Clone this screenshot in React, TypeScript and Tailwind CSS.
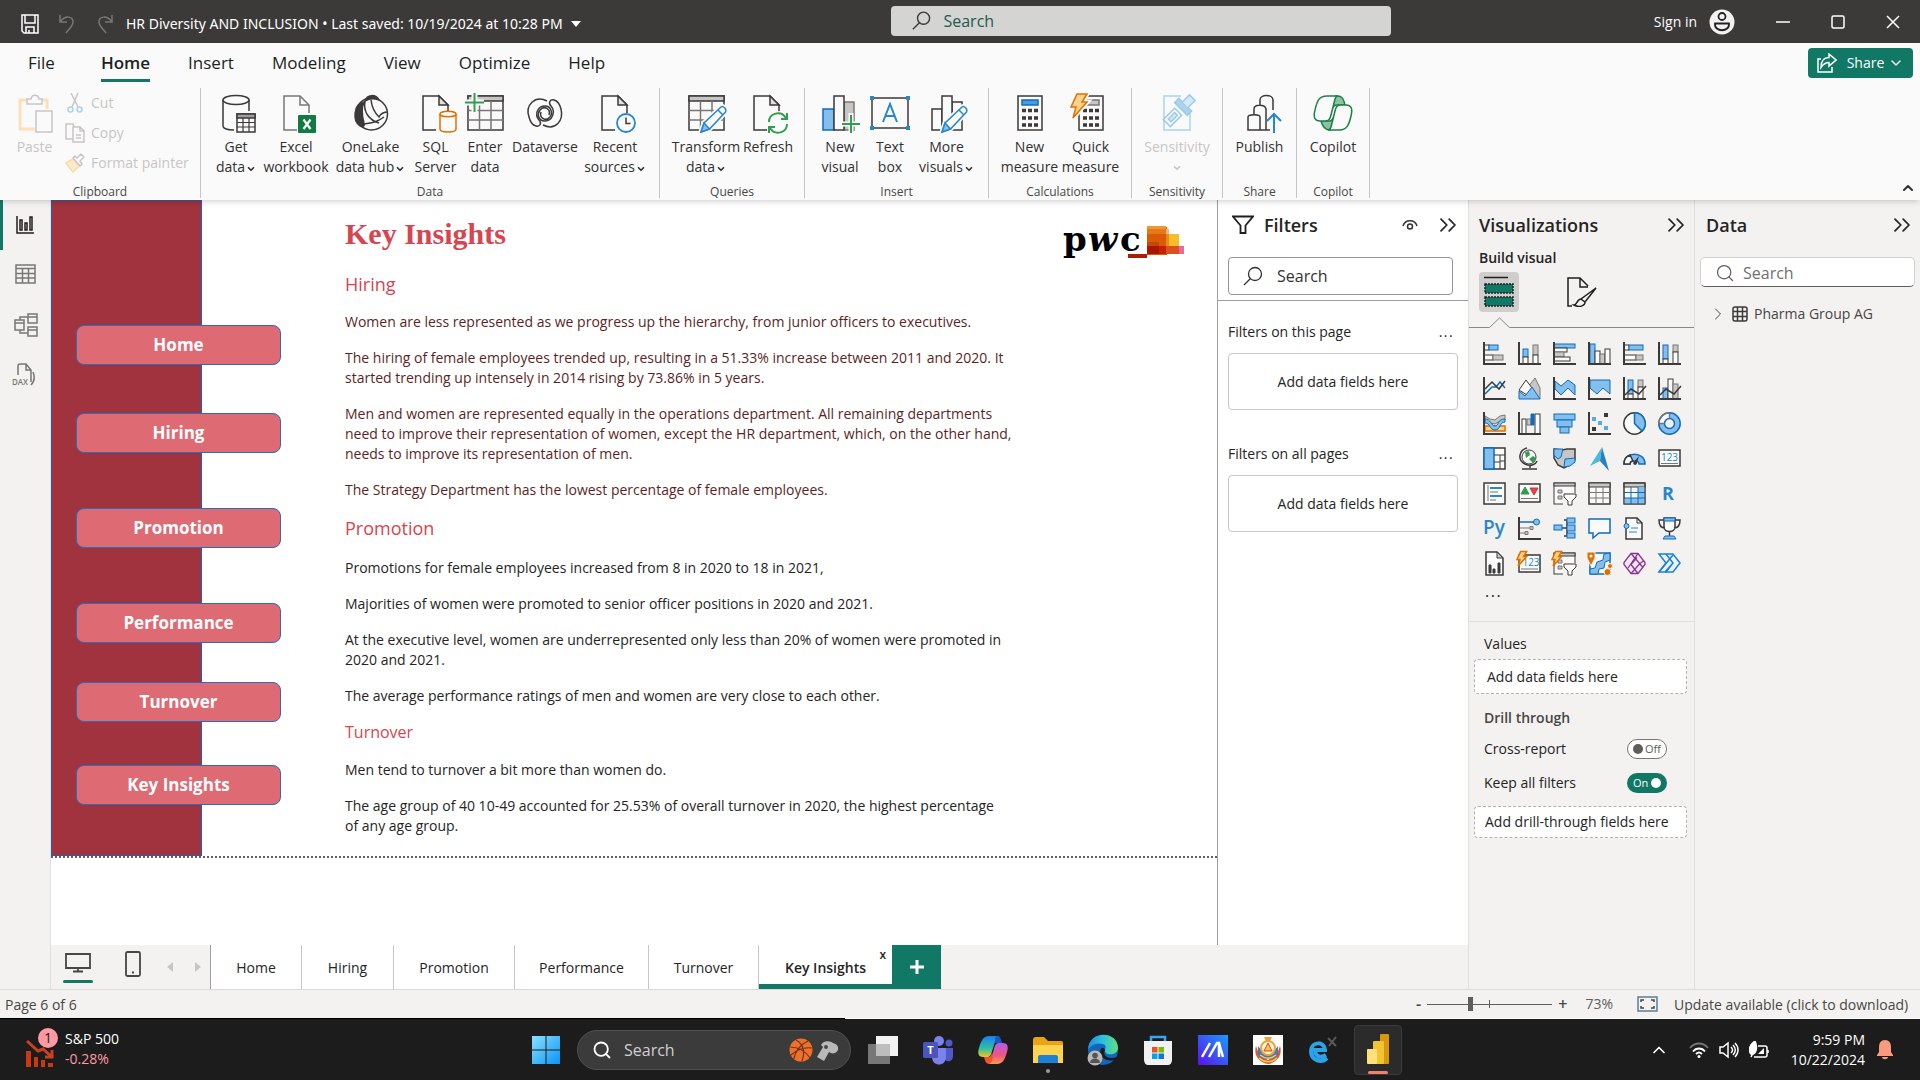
import React from "react";
import { ChevronDown, ChevronUp, ChevronRight, ChevronsRight, Search as SearchIcon } from "lucide-react";

const K = "#3b3a39";
const G = "#797775";
const GF = "#c8c6c4";
const B = "#0f6cbd";
const BF = "#83beec";
const W = "#fafafa";
const GREEN = "#2f9e4f";

type Kids = { children?: React.ReactNode };

/* ---------- ribbon icons (40 x 40) ---------- */

function Ico({ children }: Kids) {
  return (
    <svg viewBox="0 0 40 40" className="h-10 w-10 shrink-0 overflow-visible" fill="none" stroke={K} strokeWidth="1.5" aria-hidden="true">
      {children}
    </svg>
  );
}

function Pencil({ x, y }: { x: number; y: number }) {
  return (
    <g transform={`translate(${x} ${y})`}>
      <path d="M0 26l3-9L20 1c2-1.600 6 2 4.500 5L8.500 23z" fill={W} stroke={W} strokeWidth="5" />
      <path d="M0 26l3-9L20 1c2-1.600 6 2 4.500 5L8.500 23z" fill={W} stroke="#2986cc" />
      <path d="M0 26l3-9 5.500 6z" fill={BF} stroke="#2986cc" />
      <path d="M17 4l5 5" stroke="#2986cc" />
    </g>
  );
}

function DocShape({ x, color = K }: { x: number; color?: string }) {
  return (
    <g transform={`translate(${x} 0)`} stroke={color}>
      <path d="M26 20V12L17 3H1v34h13" fill={W} />
      <path d="M17 3v9h9z" fill="#e1dfdd" />
    </g>
  );
}

const GetDataIcon = () => (
  <Ico>
    <ellipse cx="20" cy="7" rx="13" ry="4.500" fill={W} />
    <path d="M7 7v26c0 2.500 5 4 11 4M33 7v11" />
    <rect x="21" y="21" width="18" height="18" fill={W} />
    <rect x="21" y="21" width="18" height="4" fill="#a19f9d" />
    <path d="M21 29.500h18M21 34h18M27 25v14M33 25v14" strokeWidth="1.200" />
  </Ico>
);
const ExcelIcon = () => (
  <Ico>
    <g transform="translate(7 0)" stroke={G}>
      <path d="M26 20V12L17 3H1v34h13" fill={W} />
      <path d="M17 3v9h9" />
    </g>
    <rect x="22" y="22" width="18" height="18" rx="1" fill="#107c41" stroke="none" />
    <path d="M27.500 26.500l7 9.500M34.500 26.500l-7 9.500" stroke="#fff" strokeWidth="2.200" />
  </Ico>
);
const OneLakeIcon = () => (
  <Ico>
    <ellipse cx="20.500" cy="21" rx="16" ry="16" />
    <path d="M13 9C3 11 1 27 9 33c3 2 5 0 4-3-2-7-3-14 0-21z" fill={K} />
    <path d="M14 8c2-7 11-7 14-1-5-2-9-2-14 1z" fill={K} />
    <path d="M14 8c-2 11 4 19 14 22M20 7c1 9 4 13 8 17 2-4 5-5 9-5M13 31c9-1 13-2 20-7" />
  </Ico>
);
const SqlIcon = () => (
  <Ico>
    <DocShape x={6} />
    <path d="M24 21v15c0 4 16 4 16 0V21" fill={W} stroke="#e07000" />
    <ellipse cx="32" cy="21" rx="8" ry="2.800" fill={W} stroke="#e07000" />
  </Ico>
);
const Grid = () => (
  <g>
    <rect x="3" y="3" width="35" height="34" fill={W} />
    <rect x="3" y="3" width="35" height="5" fill={GF} />
    <path d="M3 17.500h35M3 27h35M14.500 8v29M26 8v29" stroke={G} />
  </g>
);
const EnterIcon = () => (
  <Ico>
    <Grid />
    <path d="M9.500 0v20M0 9.500h19" stroke={W} strokeWidth="6" />
    <path d="M9.500 0v19M0 9.500h19" stroke={GREEN} strokeWidth="2" />
  </Ico>
);
const DataverseIcon = () => (
  <Ico>
    <path d="M22 8C10 2 0 12 4 24c1 4 3 8 7 9 4 1 6-3 3-6-5-6-1-14 6-14 6 0 8 7 5 11-4 5-11 1-9-5" />
    <path d="M18 32c12 6 21-4 18-16-1-4-3-8-7-9-4-1-6 3-3 6 5 6 1 15-6 15-7 0-8-7-5-11 4-5 11-1 9 5" />
  </Ico>
);
const RecentIcon = () => (
  <Ico>
    <DocShape x={6} />
    <circle cx="31" cy="30" r="9" fill={W} stroke="#2986cc" strokeWidth="1.800" />
    <path d="M31 24.500V30.500h4.500" />
  </Ico>
);
const TransformIcon = () => (
  <Ico>
    <Grid />
    <Pencil x={15} y={13} />
  </Ico>
);
const RefreshIcon = () => (
  <Ico>
    <DocShape x={5} />
    <circle cx="30" cy="30" r="12" fill={W} stroke="none" />
    <path d="M21 29c0-9 12-12 17-4M39 20v6h-6M39 31c0 9-12 12-17 4M21 40v-6h6" stroke={GREEN} strokeWidth="2" />
  </Ico>
);
const NewVisualIcon = () => (
  <Ico>
    <rect x="24" y="9" width="10" height="28" fill={GF} stroke={G} />
    <rect x="3" y="16" width="11" height="21" fill={BF} stroke={B} />
    <rect x="14" y="3" width="10" height="34" fill={W} />
    <path d="M31 20v20M20 31h20" stroke={W} strokeWidth="5" />
    <path d="M31 22v18M22 31h18" stroke={GREEN} strokeWidth="2" />
  </Ico>
);
const TextBoxIcon = () => (
  <Ico>
    <rect x="2" y="5" width="36" height="30" fill={W} />
    <path d="M0 3h4v4H0zM36 3h4v4h-4zM0 33h4v4H0zM36 33h4v4h-4z" fill="#2986cc" stroke="none" />
    <path d="M13 29l7-18 7 18M15.500 23h9" stroke="#2986cc" strokeWidth="2" />
  </Ico>
);
const MoreVisualsIcon = () => (
  <Ico>
    <rect x="25" y="9" width="10" height="28" fill={W} />
    <rect x="5" y="16" width="10" height="21" fill={W} />
    <rect x="15" y="3" width="10" height="34" fill={W} />
    <Pencil x={15} y={13} />
  </Ico>
);
const CalcBody = ({ blue }: { blue: boolean }) => (
  <g>
    <rect x="8" y="3" width="24" height="34" fill={W} />
    <rect x="12" y="7" width="16" height="5" fill={blue ? "#4a9be0" : GF} stroke={blue ? B : G} />
    <path d="M12 17.500h4m2 0h4m2 0h4M12 25h4m2 0h4m2 0h4M12 32h4m2 0h4m2 0h4" strokeWidth="3.500" />
  </g>
);
const CalcIcon = () => (
  <Ico>
    <CalcBody blue />
  </Ico>
);
const QuickIcon = () => (
  <Ico>
    <CalcBody blue={false} />
    <path d="M6 1h10l-5 8h5L2 25l3-11H0z" stroke={W} strokeWidth="5" />
    <path d="M6 1h10l-5 8h5L2 25l3-11H0z" fill="#fdd28a" stroke="#e07000" />
  </Ico>
);
const SensitivityIcon = () => (
  <Ico>
    <path d="M24 3H7v34h26V20" stroke="#a9d3ee" />
    <g transform="rotate(45 24 16)" stroke="#9ccbe9">
      <path d="M19 20h10v16H19z" fill={W} />
      <path d="M22 23h4v9h-4z" fill="#cfe6f5" />
      <path d="M15 10h18v6H15z" fill="#a9d3ee" />
      <path d="M20 10V0h8v10" fill="#d4e9f7" />
    </g>
  </Ico>
);
const PublishIcon = () => (
  <Ico>
    <path d="M20 12V7c0-6 13-6 13 0v10M14 21v-5c0-5 11-5 12 0v21M8 37V24c0-3 12-3 12 0v13zM20 37h10" />
    <path d="M34 40V22M27 28l7-7 7 7" stroke="#2986cc" strokeWidth="2" />
  </Ico>
);
const CopilotIcon = () => (
  <Ico>
    <g stroke="#1c8049">
      <path d="M23 3c3 0 7-1 9 9h-9c-2 0-3 2-4 4l1-7c0-3 1-5 3-6z" fill="#8bc2a0" />
      <path d="M17 37c-3 0-7-1-9-9h9c2 0 3-2 4-4l-2 9c-1 2-1 4-2 4z" fill="#8bc2a0" />
      <path d="M25 3H14C6 3 4 8 2 17c-2 8 0 11 5 11h5c4 0 5-2 6-6l3-12c1-4 1-7 4-7z" fill={W} />
      <path d="M15 37h11c8 0 10-5 12-14 2-8 0-11-5-11h-5c-4 0-5 2-6 6l-3 12c-1 4-1 7-4 7z" fill={W} />
    </g>
  </Ico>
);

/* ---------- visualization icons (23 x 23) ---------- */

type RectProps = { x: number; y: number; w: number; h: number; c: "b" | "g" | "w" | "k" };
function R({ x, y, w, h, c }: RectProps) {
  const fill = { b: BF, g: GF, w: W, k: W }[c];
  const stroke = { b: B, g: G, w: K, k: K }[c];
  return <rect x={x} y={y} width={w} height={h} fill={fill} stroke={stroke} />;
}
const Axis = () => <path d="M1 0v22h22" strokeWidth="2" />;
const SmallBolt = () => (
  <g transform="translate(-1 -1) scale(.6)">
    <path d="M6 1h10l-5 8h5L2 25l3-11H0z" fill="#fdd28a" stroke="#e07000" strokeWidth="2.500" />
  </g>
);
const Funnel = () => <path d="M11 12h12v3l-4 4v4h-4v-4l-4-4z" fill={W} />;
const SlicerBase = () => (
  <g>
    <rect x="1" y="1" width="21" height="21" fill={W} />
    <rect x="1" y="1" width="21" height="3" fill={GF} />
    <path d="M5 8h4v3H5zM5 14h4v3H5z" fill={GF} stroke={G} />
    <path d="M10 11h15v15H10z" fill="#f3f2f1" stroke="none" />
    <Funnel />
  </g>
);
const Num = ({ x = 11.5 }: { x?: number }) => (
  <text x={x} y="14" textAnchor="middle" fontSize="10" fill="#2986cc" stroke="none" fontFamily="Open Sans, sans-serif">
    123
  </text>
);

const visuals: [string, React.ReactNode][] = [
  ["Stacked bar chart", <><R x={1} y={3} w={5} h={5} c="w" /><R x={6} y={3} w={9} h={5} c="b" /><R x={1} y={13} w={9} h={5} c="w" /><R x={10} y={13} w={10} h={5} c="g" /><Axis /></>],
  ["Stacked column chart", <><R x={5} y={7} w={5} h={8} c="b" /><R x={5} y={15} w={5} h={7} c="w" /><R x={15} y={3} w={5} h={10} c="g" /><R x={15} y={13} w={5} h={9} c="w" /><Axis /></>],
  ["Clustered bar chart", <><R x={1} y={2} w={21} h={4} c="b" /><R x={1} y={6} w={13} h={4} c="w" /><R x={1} y={10} w={10} h={5} c="g" /><R x={1} y={15} w={16} h={4} c="w" /><Axis /></>],
  ["Clustered column chart", <><R x={2} y={2} w={5} h={20} c="b" /><R x={7} y={9} w={5} h={13} c="w" /><R x={12} y={12} w={5} h={10} c="g" /><R x={17} y={7} w={5} h={15} c="w" /><Axis /></>],
  ["100% stacked bar chart", <><R x={1} y={3} w={5} h={5} c="w" /><R x={6} y={3} w={14} h={5} c="b" /><R x={1} y={13} w={12} h={5} c="w" /><R x={13} y={13} w={7} h={5} c="g" /><Axis /></>],
  ["100% stacked column chart", <><R x={5} y={3} w={5} h={14} c="b" /><R x={5} y={17} w={5} h={5} c="w" /><R x={15} y={3} w={5} h={7} c="g" /><R x={15} y={10} w={5} h={12} c="w" /><Axis /></>],
  ["Line chart", <><path d="M2 17l7-7h4l4-5 5 6" stroke={B} strokeWidth="1.500" /><path d="M2 12l7-7 7 7 6-8" strokeWidth="1.500" /><Axis /></>],
  ["Area chart", <><path d="M10 10L17 1l5 10v11z" fill={GF} stroke={G} /><path d="M1 13L8 3l6 8-5 7z" fill={W} /><path d="M1 22v-8l6 5 7-9 8 12z" fill={BF} stroke={B} /></>],
  ["Stacked area chart", <><path d="M2 4l6 5 7-6 7 5v10l-7-7-7 7-6-6z" fill={BF} stroke={B} /><Axis /></>],
  ["100% stacked area chart", <><path d="M2 3h20v14l-7-6-6 6-7-6z" fill={BF} stroke={B} /><Axis /></>],
  ["Line and stacked column chart", <><R x={5} y={3} w={5} h={14} c="b" /><R x={5} y={17} w={5} h={5} c="w" /><R x={15} y={3} w={5} h={7} c="g" /><R x={15} y={10} w={5} h={12} c="w" /><path d="M2 18l6-6 8 5 7-8" strokeWidth="1.500" /><Axis /></>],
  ["Line and clustered column chart", <><R x={5} y={11} w={5} h={11} c="b" /><R x={10} y={2} w={5} h={20} c="w" /><R x={15} y={7} w={5} h={15} c="g" /><path d="M2 18l6-6 8 5 7-8" strokeWidth="1.500" /><Axis /></>],
  ["Ribbon chart", <><path d="M2 14h20v5H2z" fill="#fdd28a" stroke="#e07000" strokeWidth="1.500" /><path d="M2 4l5 3 5 1 5-4 5-1v5l-5 1-5 3-5-1-5-3z" fill={GF} stroke={G} /><path d="M2 11c6 0 4 7 10 7s4-8 10-8v-3c-8 0-6 7-10 7S8 7 2 7z" fill={BF} stroke={B} /><Axis /></>],
  ["Waterfall chart", <><R x={4} y={7} w={4} h={15} c="w" /><path d="M9 7h4v6H9z" fill={GF} stroke={G} /><path d="M13 2h3v11h-3z" fill={B} stroke={B} /><R x={17} y={2} w={5} h={20} c="w" /><Axis /></>],
  ["Funnel chart", <><R x={1} y={2} w={21} h={6} c="b" /><R x={4} y={8} w={15} h={7} c="b" /><R x={7} y={15} w={9} h={6} c="b" /></>],
  ["Scatter chart", <><path d="M16 1h4v4h-4zM4 15h4v4H4z" fill={K} stroke="none" /><path d="M4 5h4v4H4zM10 9h4v4h-4zM16 14h4v4h-4z" fill="#5aa9e6" stroke="none" /><Axis /></>],
  ["Pie chart", <><circle cx="11.500" cy="11.500" r="10.700" fill={W} strokeWidth="1.500" /><path d="M11.500.8a10.700 10.700 0 017.500 18.300l-7.500-7.600z" fill={BF} stroke={B} strokeWidth="1.500" /></>],
  ["Donut chart", <><circle cx="11.500" cy="11.500" r="8" stroke={BF} strokeWidth="6" /><path d="M11.500 3.500a8 8 0 00-8 8" stroke={W} strokeWidth="6" /><circle cx="11.500" cy="11.500" r="10.700" stroke={B} strokeWidth="1.500" /><circle cx="11.500" cy="11.500" r="5" fill="#f3f2f1" stroke={B} strokeWidth="1.500" /><path d="M11.500.8A10.700 10.700 0 00.8 11.500H6.500M11.500.8V6.500" stroke={G} strokeWidth="1.500" /></>],
  ["Treemap", <><rect x="1" y="1" width="21" height="21" fill={W} strokeWidth="1.500" /><path d="M1 1h10v21H1z" fill={BF} stroke={B} strokeWidth="1.500" /><path d="M11 8h11M17 8v14M11 15h6M17 14h5" /></>],
  ["Map", <><circle cx="11" cy="10" r="7" fill={W} /><path d="M7 5l4-1 1 4-4 3zM11 12l4-3 3 2-3 5z" fill={GREEN} stroke="none" /><path d="M9 1C1 3-1 13 7 17c6 3 11 0 12-3M12 18v3M4 22h15" strokeWidth="1.500" /></>],
  ["Filled map", <><path d="M1 2l8 1 5-1h8v11l-5 5-6 3-6-3-4-7z" fill={GF} strokeWidth="1.500" /><path d="M1 2h9l-2 8 -3 2-4-4zM12 12l10-1v4l-5 4-6 1z" fill={BF} stroke={B} /></>],
  ["Azure map", <><path d="M14 0L2 19l10-5z" fill="#4cbada" stroke="none" /><path d="M14 0l-2 14 9 10z" fill="#2a7fc1" stroke="none" /></>],
  ["Gauge", <><path d="M1 17C1 4 22 4 22 17h-6c0-4-9-4-9 0z" fill={BF} stroke={B} strokeWidth="1.500" /><path d="M1 17C1 12 4 9 7 8l3 6c-2 0-3 1-3 3z" fill={W} strokeWidth="1.500" /><path d="M16 9l-6 7c1 3 4 2 4 0z" fill={K} stroke="none" /></>],
  ["Card", <><rect x="1" y="3" width="21" height="16" fill={W} strokeWidth="1.500" /><Num /><path d="M3 16.500h17" stroke={G} /></>],
  ["Multi-row card", <><rect x="1" y="1" width="21" height="21" fill={W} strokeWidth="1.500" /><path d="M5 3v16M7 10h8M7 18h6" stroke={G} /><path d="M7 6h12M7 14h12" stroke="#2986cc" strokeWidth="2" /></>],
  ["KPI", <><rect x="1" y="2" width="21" height="18" fill={W} strokeWidth="1.500" /><path d="M3 12l4-7 4 7z" fill={GREEN} stroke={GREEN} /><path d="M12 6h8l-4 7z" fill="#e8434b" stroke="#d13438" /><path d="M3 16.500h17" stroke={G} /></>],
  ["Slicer", <SlicerBase />],
  ["Table", <><rect x="1" y="1" width="21" height="21" fill={W} strokeWidth="1.500" /><rect x="1" y="1" width="21" height="4" fill={GF} /><path d="M1 10.500h21M1 16h21M8 5v17M15 5v17" stroke={G} /></>],
  ["Matrix", <><rect x="1" y="1" width="21" height="21" fill={W} /><rect x="1" y="1" width="21" height="4" fill={GF} /><path d="M15 5h7v17H1v-6h14z" fill={BF} stroke="none" /><path d="M1 10.500h21M1 16h21M8 5v17M15 5v17" stroke={B} /><rect x="1" y="1" width="21" height="21" /></>],
  ["R script visual", <text x="10" y="18" textAnchor="middle" fontSize="18" fontWeight="700" fill="#2986cc" stroke="none" fontFamily="Open Sans, sans-serif">R</text>],
  ["Python visual", <text x="11" y="17" textAnchor="middle" fontSize="19" fontWeight="600" fill="#2986cc" stroke="none" fontFamily="Open Sans, sans-serif">Py</text>],
  ["Key influencers", <><path d="M2 5h14" stroke={B} strokeWidth="1.500" /><circle cx="18.500" cy="5" r="3" fill={BF} stroke={B} /><path d="M2 11h10M2 16h5" stroke={G} /><path d="M12 9.500h3v3h-3zM7 14.500h3v3H7z" fill={GF} stroke={G} /><Axis /></>],
  ["Decomposition tree", <><path d="M9 11h5M14 3v16M11 3h4M11 11h4M11 19h4" strokeWidth="1.500" /><R x={1} y={8} w={8} h={5} c="b" /><R x={14} y={1} w={8} h={5} c="b" /><R x={14} y={8} w={8} h={6} c="b" /><R x={14} y={16} w={8} h={5} c="b" /></>],
  ["Q&A", <path d="M1 2h21v14H11l-6 5v-5H1z" fill={W} stroke={B} strokeWidth="1.500" />],
  ["Narrative", <><path d="M3 1h11l5 5v16H3z" fill={W} strokeWidth="1.500" /><path d="M14 1v5h5" /><circle cx="3.500" cy="9" r="2.500" fill={BF} stroke={B} /><path d="M8 11h7M6 15h8" stroke="#2986cc" /></>],
  ["Goals", <><path d="M6 1h11v9c0 6-11 6-11 0zM6 3H1c0 5 2 8 6 8M17 3h5c0 5-2 8-6 8M11.500 15v4" fill={W} strokeWidth="1.500" /><path d="M6 1h11v3H6z" fill={BF} stroke={B} /><path d="M5 22l2-3h9l2 3z" fill={BF} stroke={B} /></>],
  ["Paginated report", <><path d="M3 0h11l6 6v17H3z" fill={W} strokeWidth="1.500" /><path d="M14 0v6h6z" fill={GF} /><path d="M6 13h2v8H6zM10 17h2v4h-2zM15 11h2v10h-2z" fill={K} strokeWidth="1" /></>],
  ["Card (new)", <><rect x="1" y="3" width="21" height="17" fill={W} strokeWidth="1.500" /><Num x={13} /><path d="M3 17h17" stroke={G} /><SmallBolt /></>],
  ["Slicer (new)", <><SlicerBase /><SmallBolt /></>],
  ["ArcGIS maps", <><rect x="2" y="1" width="20" height="21" fill={W} stroke={B} strokeWidth="1.500" /><path d="M22 1v7l-5 2-1 6-5 1-1 5h-8v-5l5-1 2-6 6-2 1-6z" fill={BF} stroke={B} /><path d="M-1 0h8v6l-4 8-4-8z" fill="#e07000" stroke="#f3f2f1" /><circle cx="3" cy="4" r="1.500" fill="#fff" stroke="none" /><circle cx="19.500" cy="20" r="3.500" fill="#e07000" stroke="#f3f2f1" /><circle cx="22" cy="14" r="2.500" fill="#e07000" stroke="#f3f2f1" /></>],
  ["Power Apps", <g stroke="#8a3594" strokeWidth="1.300"><path d="M8 1.500L1 10.500v2l7 9h7l7-9v-2l-7-9z" fill="#f6e8f8" /><path d="M8 1.500l12 14M15 1.500L5 16M15 21.500l-7-9 6-7M8 21.500l9-10M17 11.500l4-3" strokeLinejoin="round" /></g>],
  ["Power Automate", <g stroke="#1a7fdb" strokeWidth="1.500"><path d="M1 2h14l7 9-7 9H1l7-9z" fill="#eaf4fd" /><path d="M8 2l7 9-7 9M15 11L7 20M1 20L15 3" /></g>],
];

/* ---------- ribbon ---------- */

type CmdProps = { w: string; lines: string[]; icon: React.ReactNode; menu?: boolean; disabled?: boolean };
function Cmd({ w, lines, icon, menu, disabled }: CmdProps) {
  return (
    <button disabled={disabled} className={`flex flex-col items-center whitespace-nowrap ${w} ${disabled ? "text-[#c8c6c4]" : "text-[#323130]"}`}>
      {icon}
      <span className="mt-1 flex flex-col items-center text-sm leading-5">
        {lines.map((l, i) => (
          <span key={l} className="flex items-center">
            {l}
            {menu && i === lines.length - 1 && lines.length > 1 && <ChevronDown className="mt-1 ml-px h-2.5 w-2.5" strokeWidth={4} />}
          </span>
        ))}
        {menu && lines.length === 1 && <ChevronDown className="mt-1.5 h-2.5 w-2.5" strokeWidth={4} />}
      </span>
    </button>
  );
}

function Group({ label, pad, children }: { label: string; pad: string } & Kids) {
  return (
    <section className="flex flex-col justify-between border-r border-[#c8c6c4]" aria-label={label}>
      <div className={`flex items-start pt-[5px] ${pad}`}>{children}</div>
      <div className="text-center text-xs leading-3 text-[#484644]">{label}</div>
    </section>
  );
}

function TitleBar() {
  return (
    <header className="flex h-[43px] items-center bg-[#3b3a39] text-white">
      <div className="flex flex-1 items-center pt-1 pl-5">
        <button aria-label="Save" className="mr-[18px]">
          <svg viewBox="0 0 20 20" className="h-5 w-5" fill="none" stroke="#fff" strokeWidth="1.500"><path d="M2 1h16v18H4l-2-2zM5 1v8h10V1M6 19v-6h8v6M9 16v3" /></svg>
        </button>
        <button aria-label="Undo" className="mr-5">
          <svg viewBox="0 0 18 20" className="h-5 w-[18px]" fill="none" stroke="#797775" strokeWidth="1.500"><path d="M2 1v7h7M2 8c5-7 13-6 13 0 0 4-4 7-7 11" /></svg>
        </button>
        <button aria-label="Redo" className="mr-3">
          <svg viewBox="0 0 18 20" className="h-5 w-[18px]" fill="none" stroke="#797775" strokeWidth="1.500"><path d="M16 1v7H9M16 8C11 1 3 2 3 8c0 4 4 7 7 11" /></svg>
        </button>
        <button className="flex items-center font-['Noto_Sans',sans-serif] text-sm whitespace-nowrap">
          HR Diversity AND INCLUSION • Last saved: 10/19/2024 at 10:28 PM
          <svg viewBox="0 0 10 6" className="ml-2 h-1.5 w-2.5" fill="#fff"><path d="M0 0h10L5 6z" /></svg>
        </button>
      </div>
      <label className="mb-px flex h-[30px] w-[500px] items-center rounded-sm bg-[#d4d4d2] px-5">
        <svg viewBox="0 0 22 22" className="mr-3 h-[22px] w-[22px]" fill="none" stroke={K} strokeWidth="1.500"><circle cx="13.500" cy="8" r="6.500" /><path d="M9 13l-7 7" /></svg>
        <input aria-label="Search" placeholder="Search" className="w-full bg-transparent text-base text-[#215950] outline-none placeholder:text-[#215950]" />
      </label>
      <div className="flex w-[529px] items-center justify-end pr-5">
        <button className="mr-[41px] flex items-center gap-3 text-sm">
          Sign in
          <svg viewBox="0 0 26 26" className="h-[26px] w-[26px]"><circle cx="13" cy="13" r="12.500" fill="#f3f2f1" /><g fill="none" stroke="#222" strokeWidth="1.800"><circle cx="13" cy="7.500" r="3.500" /><path d="M6 14.500h14c1 9-15 9-14 0z" /></g></svg>
        </button>
        <button aria-label="Minimize" className="mr-[41px]"><svg viewBox="0 0 14 14" className="h-3.5 w-3.5" stroke="#fff" strokeWidth="1.500"><path d="M0 7h14" /></svg></button>
        <button aria-label="Maximize" className="mr-[41px]"><svg viewBox="0 0 14 14" className="h-3.5 w-3.5" fill="none" stroke="#fff" strokeWidth="1.500"><rect x="1" y="1" width="12" height="12" rx="1.500" /></svg></button>
        <button aria-label="Close"><svg viewBox="0 0 14 14" className="h-3.5 w-3.5" stroke="#fff" strokeWidth="1.500"><path d="M1 1l12 12M13 1L1 13" /></svg></button>
      </div>
    </header>
  );
}

function MenuBar() {
  return (
    <nav className="flex h-[45px] items-center justify-between pr-[7px]">
      <div className="flex h-full items-center gap-[38px] pb-1.5 pl-7 text-[17px] text-[#201f1e]">
        <button className="mr-2">File</button>
        <button className="flex h-full flex-col justify-end font-semibold">
          <span className="mb-1">Home</span>
          <span className="h-[3px] bg-[#117865]" />
        </button>
        {["Insert", "Modeling", "View", "Optimize", "Help"].map((t) => (
          <button key={t}>{t}</button>
        ))}
      </div>
      <button className="mb-1.5 flex h-[30px] w-[105px] items-center justify-center rounded bg-[#117865] text-sm text-white">
        <svg viewBox="0 0 20 20" className="mr-2.5 h-5 w-5" fill="none" stroke="#fff" strokeWidth="1.500"><path d="M4 6H1v13h14v-5" /><path d="M12 1l7 6-7 6V9.500c-4 0-6 2-8 5C4 8 7 4.500 12 4.500z" /></svg>
        Share
        <ChevronDown className="ml-1 h-4 w-4" />
      </button>
    </nav>
  );
}

function Ribbon() {
  return (
    <div className="flex h-28 items-stretch pb-0.5">
      <section className="flex flex-col justify-between border-r border-[#c8c6c4]" aria-label="Clipboard">
        <div className="flex pt-[5px] text-sm leading-5 text-[#c8c6c4]">
          <button disabled className="flex w-[65px] flex-col items-center pl-1">
            <svg viewBox="0 0 40 40" className="h-10 w-10 overflow-visible" fill="none"><path d="M12 7H5v29h15M26 7h6v9" stroke="#fbe0b8" strokeWidth="3" /><path d="M12 11V6h4c1-5 7-5 8 0h3v5z" fill={W} stroke={GF} strokeWidth="1.500" /><rect x="21" y="18" width="16" height="21" fill={W} stroke={GF} strokeWidth="1.500" /></svg>
            <span className="mt-1">Paste</span>
          </button>
          <div className="flex w-[135px] flex-col gap-2.5">
            <button disabled className="flex items-center gap-1.5">
              <svg viewBox="0 0 20 20" className="h-5 w-5" fill="none" strokeWidth="1.500"><path d="M6 0l7 14M13 0L7 14" stroke={GF} /><circle cx="5.500" cy="16.500" r="2.500" stroke="#a9d3ee" /><circle cx="14.500" cy="16.500" r="2.500" stroke="#a9d3ee" /></svg>
              Cut
            </button>
            <button disabled className="flex items-center gap-1.5">
              <svg viewBox="0 0 20 20" className="h-5 w-5" fill="none" stroke={GF} strokeWidth="1.500"><path d="M8 16H1V1h7l1 3" /><path d="M8 4h7l4 4v11H8zM15 4v4h4M11 12h5M11 15h5" /></svg>
              Copy
            </button>
            <button disabled className="flex items-center gap-1.5 whitespace-nowrap">
              <svg viewBox="0 0 20 20" className="h-5 w-5" fill="none" strokeWidth="1.500"><path d="M1 10l7-4 6 7-6 6z" fill="#fdebd0" stroke="#fbd9a8" /><path d="M8 5l7 8 2-2-2-3 4-4-3-3-4 4-2-2z" fill={W} stroke={GF} /></svg>
              Format painter
            </button>
          </div>
        </div>
        <div className="text-center text-xs leading-3 text-[#484644]">Clipboard</div>
      </section>
      <Group label="Data" pad="px-2">
        <Cmd w="w-[54px]" lines={["Get", "data"]} icon={<GetDataIcon />} menu />
        <Cmd w="w-[66px]" lines={["Excel", "workbook"]} icon={<ExcelIcon />} />
        <Cmd w="w-[83px]" lines={["OneLake", "data hub"]} icon={<OneLakeIcon />} menu />
        <Cmd w="w-[47px]" lines={["SQL", "Server"]} icon={<SqlIcon />} />
        <Cmd w="w-[52px]" lines={["Enter", "data"]} icon={<EnterIcon />} />
        <Cmd w="w-[68px]" lines={["Dataverse"]} icon={<DataverseIcon />} />
        <Cmd w="w-[72px]" lines={["Recent", "sources"]} icon={<RecentIcon />} menu />
      </Group>
      <Group label="Queries" pad="pl-3 pr-2">
        <Cmd w="w-[68px]" lines={["Transform", "data"]} icon={<TransformIcon />} menu />
        <Cmd w="w-14" lines={["Refresh"]} icon={<RefreshIcon />} />
      </Group>
      <Group label="Insert" pad="px-2.5">
        <Cmd w="w-[50px]" lines={["New", "visual"]} icon={<NewVisualIcon />} />
        <Cmd w="w-[50px]" lines={["Text", "box"]} icon={<TextBoxIcon />} />
        <Cmd w="w-[63px]" lines={["More", "visuals"]} icon={<MoreVisualsIcon />} menu />
      </Group>
      <Group label="Calculations" pad="px-2.5">
        <Cmd w="w-[61px]" lines={["New", "measure"]} icon={<CalcIcon />} />
        <Cmd w="w-[61px]" lines={["Quick", "measure"]} icon={<QuickIcon />} />
      </Group>
      <Group label="Sensitivity" pad="px-2.5">
        <Cmd w="w-[70px]" lines={["Sensitivity"]} icon={<SensitivityIcon />} menu disabled />
      </Group>
      <Group label="Share" pad="px-2.5">
        <Cmd w="w-[53px]" lines={["Publish"]} icon={<PublishIcon />} />
      </Group>
      <Group label="Copilot" pad="px-2.5">
        <Cmd w="w-[52px]" lines={["Copilot"]} icon={<CopilotIcon />} />
      </Group>
      <button aria-label="Collapse ribbon" className="mr-1 ml-auto self-end pb-0.5 text-[#323130]">
        <ChevronUp className="h-4 w-4" strokeWidth={3} />
      </button>
    </div>
  );
}

/* ---------- report canvas ---------- */

function ViewRail() {
  return (
    <nav className="flex w-[51px] shrink-0 flex-col border-r border-[#e1dfdd] bg-[#f3f2f1]" aria-label="Views">
      <button aria-label="Report view" className="flex h-[50px] items-center border-l-[3px] border-[#117865] pl-3">
        <svg viewBox="0 0 20 20" className="h-5 w-5" fill="none" stroke="#201f1e" strokeWidth="1.500"><path d="M2 1v17h17M5 5h2v10H5zM10 8h2v7h-2zM15 2h2v13h-2z" /></svg>
      </button>
      <button aria-label="Table view" className="flex h-12 items-center pl-[15px]">
        <svg viewBox="0 0 21 20" className="h-5 w-[21px]" fill="none" stroke={G} strokeWidth="1.500"><path d="M1 1h19v18H1zM1 4.500h19M1 9.500h19M1 14h19M7.500 4v15M13.500 4v15" /></svg>
      </button>
      <button aria-label="Model view" className="flex h-[54px] items-center pl-[14px]">
        <svg viewBox="0 0 24 24" className="h-6 w-6" fill="none" stroke={G} strokeWidth="1.500"><path d="M14 1h9v9h-9zM14 4h9M1 7h9v10H1zM1 10h9M14 14h9v9h-9zM14 17h9M6 7V4h8M6 17v3h8" /></svg>
      </button>
      <button aria-label="DAX query view" className="flex h-[46px] items-center pl-3">
        <svg viewBox="0 0 24 24" className="h-6 w-6" fill="none" stroke={G} strokeWidth="1.500"><path d="M6 12V3c0-2 1-2 2-2h6l5 6v12M14 1v6h5M21 9c2 5 1 10-2 13" /><text x="8" y="22" textAnchor="middle" fontSize="8" fontWeight="600" fill={G} stroke="none" fontFamily="Open Sans, sans-serif">DAX</text></svg>
      </button>
    </nav>
  );
}

const pageButtons: [string, string][] = [
  ["Home", "mt-[124px]"],
  ["Hiring", "mt-12"],
  ["Promotion", "mt-[55px]"],
  ["Performance", "mt-[55px]"],
  ["Turnover", "mt-[39px]"],
  ["Key Insights", "mt-[43px]"],
];

function PwcLogo() {
  return (
    <svg viewBox="0 0 122 40" className="h-10 w-[122px] shrink-0 overflow-visible" role="img" aria-label="pwc">
      <g shapeRendering="crispEdges">
        <path d="M84 3h20v28H84z" fill="#dc5a06" />
        <path d="M84 2h19v3H84z" fill="#f0982f" />
        <path d="M84 5h19v5H84z" fill="#e4791b" />
        <path d="M103 5h3v5h-3z" fill="#f5b27a" />
        <path d="M103 10h3v12h-3z" fill="#e98c1c" />
        <path d="M106 10h10v12h-10z" fill="#f5be26" />
        <path d="M84 18h12v4H84z" fill="#c04808" />
        <path d="M84 22h12v8H84z" fill="#a81505" />
        <path d="M96 22h7v8h-7z" fill="#c52000" />
        <path d="M103 22h13v8h-13z" fill="#dd4f1b" />
        <path d="M116 22h5v8h-5z" fill="#e669a2" />
        <path d="M65 30h19v4H65z" fill="#ad1c05" />
      </g>
      <text y="27" fontSize="34" fontWeight="700" fontFamily="DejaVu Serif, serif" fill="#000">
        <tspan x="0">p</tspan>
        <tspan x="25" fontStyle="italic">w</tspan>
        <tspan x="57">c</tspan>
      </text>
    </svg>
  );
}

function ReportPage() {
  return (
    <div className="flex min-w-0 flex-1 flex-col bg-white">
      <div className="flex border-b-2 border-dotted border-[#605e5c]">
        <aside className="w-[151px] shrink-0 border border-[#2a5ea8] bg-[#a0333d] pb-[50px]">
          {pageButtons.map(([t, m]) => (
            <button key={t} className={`ml-6 flex h-10 w-[205px] items-center justify-center rounded-lg border border-[#2a6cc0] bg-[#de6a73] text-[17px] font-bold text-white ${m}`}>
              {t}
            </button>
          ))}
        </aside>
        <article className="ml-[143px] w-[670px] shrink-0 pt-3.5 text-sm leading-5 text-[#252423]">
          <h1 className="mb-[18px] font-['Liberation_Serif',serif] text-3xl leading-10 font-bold text-[#d64550]">Key Insights</h1>
          <div className="text-[#5c1f25] [&>p]:mb-4">
            <h2 className="mb-4 text-lg leading-6 text-[#d64550]">Hiring</h2>
            <p>Women are less represented as we progress up the hierarchy, from junior officers to executives.</p>
            <p>The hiring of female employees trended up, resulting in a 51.33% increase between 2011 and 2020. It<br />started trending up intensely in 2014 rising by 73.86% in 5 years.</p>
            <p>Men and women are represented equally in the operations department. All remaining departments<br />need to improve their representation of women, except the HR department, which, on the other hand,<br />needs to improve its representation of men.</p>
            <p>The Strategy Department has the lowest percentage of female employees.</p>
          </div>
          <div className="[&>p]:mb-4">
            <h2 className="mb-[18px] text-lg leading-6 text-[#d64550]">Promotion</h2>
            <p>Promotions for female employees increased from 8 in 2020 to 18 in 2021,</p>
            <p>Majorities of women were promoted to senior officer positions in 2020 and 2021.</p>
            <p>At the executive level, women are underrepresented only less than 20% of women were promoted in<br />2020 and 2021.</p>
            <p>The average performance ratings of men and women are very close to each other.</p>
            <h2 className="mb-[18px] text-base leading-5 text-[#d64550]">Turnover</h2>
            <p>Men tend to turnover a bit more than women do.</p>
            <p>The age group of 40 10-49 accounted for 25.53% of overall turnover in 2020, the highest percentage<br />of any age group.</p>
          </div>
        </article>
        <div className="ml-auto pt-6 pr-8">
          <PwcLogo />
        </div>
      </div>
    </div>
  );
}

function FiltersPane() {
  return (
    <aside className="w-[251px] shrink-0 border-l border-[#a19f9d] bg-white text-[#252423]" aria-label="Filters">
      <div className="flex h-12 items-center pt-0.5 pr-1.5 pl-3.5">
        <svg viewBox="0 0 22 20" className="h-5 w-[22px]" fill="none" stroke="#201f1e" strokeWidth="1.800"><path d="M1 1.500h20l-7.500 9V18h-5v-7.500z" /></svg>
        <h2 className="ml-2.5 flex-1 text-lg font-semibold">Filters</h2>
        <button aria-label="Toggle filter preview"><svg viewBox="0 0 16 12" className="h-3 w-4" fill="none" stroke="#323130" strokeWidth="1.500"><path d="M1 7c2-7 12-7 14 0" /><circle cx="8" cy="7.500" r="2.500" /></svg></button>
        <button aria-label="Collapse filters" className="ml-4"><ChevronsRight className="h-7 w-7" strokeWidth={1.5} /></button>
      </div>
      <div className="border-b border-[#a19f9d] pt-[9px] pr-[15px] pb-[5px] pl-2.5">
        <label className="flex h-[38px] items-center rounded-sm border border-[#979593] px-3.5">
          <svg viewBox="0 0 20 20" className="mr-3.5 h-5 w-5 shrink-0" fill="none" stroke="#323130" strokeWidth="1.300"><circle cx="12" cy="8" r="6.500" /><path d="M7.500 12.500L1 19" /></svg>
          <input aria-label="Search filters" placeholder="Search" className="w-full bg-transparent text-base outline-none placeholder:text-[#323130]" />
        </label>
      </div>
      {["Filters on this page", "Filters on all pages"].map((t) => (
        <section key={t} className="px-2.5 pt-[21px] pb-[13px] text-sm">
          <div className="flex h-5 items-center justify-between">
            <h3>{t}</h3>
            <button aria-label={`${t} options`} className="pr-1 tracking-widest">...</button>
          </div>
          <button className="mt-[11px] h-[57px] w-full rounded-sm border border-[#c8c6c4]">Add data fields here</button>
        </section>
      ))}
    </aside>
  );
}

function Toggle({ label, on }: { label: string; on: boolean }) {
  return (
    <label className="flex h-[34px] items-center justify-between pr-[27px] pl-2.5">
      {label}
      <input type="checkbox" defaultChecked={on} className="sr-only" />
      {on ? (
        <span className="flex h-5 w-10 items-center justify-between rounded-full bg-[#117865] px-1.5 text-[11px] text-white">
          On <span className="h-2.5 w-2.5 rounded-full bg-white" />
        </span>
      ) : (
        <span className="flex h-5 w-10 items-center justify-between rounded-full border border-[#797775] bg-white px-[5px] text-[11px] text-[#605e5c]">
          <span className="h-2.5 w-2.5 rounded-full bg-[#605e5c]" /> Off
        </span>
      )}
    </label>
  );
}

function VisualizationsPane() {
  return (
    <aside className="w-[226px] shrink-0 border-l border-[#e1dfdd] bg-[#f3f2f1] text-sm text-[#252423]" aria-label="Visualizations">
      <div className="flex h-12 items-center justify-between pt-0.5 pr-1 pl-2.5">
        <h2 className="text-lg font-semibold">Visualizations</h2>
        <button aria-label="Collapse visualizations"><ChevronsRight className="h-7 w-7" strokeWidth={1.5} /></button>
      </div>
      <h3 className="pl-2.5 leading-5 font-semibold">Build visual</h3>
      <div className="flex gap-[43px] pt-1 pl-2.5">
        <button aria-label="Build visual" className="flex h-10 w-10 items-center justify-center rounded-sm bg-[#d0cecd]">
          <svg viewBox="0 0 30 32" className="h-8 w-[30px]"><path d="M0 1.500h24" stroke="#201f1e" strokeWidth="1.500" /><rect x="1" y="8" width="28" height="9" fill="#117865" stroke="#201f1e" strokeWidth="1.500" strokeDasharray="2 1" /><rect x="1" y="21" width="28" height="9" fill="#117865" stroke="#201f1e" strokeWidth="1.500" strokeDasharray="2 1" /></svg>
        </button>
        <button aria-label="Format visual" className="flex h-10 w-10 items-center justify-center">
          <svg viewBox="0 0 30 30" className="h-[30px] w-[30px]" fill="none" stroke="#201f1e" strokeWidth="1.500"><path d="M5 29H1V1h12l8 8M13 1v9h8" /><path d="M29 11L18 25l-4-3zM14 22c-4 0-4 6-7 6 5 3 11 1 11-3" /></svg>
        </button>
      </div>
      <svg viewBox="0 0 225 16" className="mt-1 block h-4 w-full overflow-visible" fill="none" stroke="#8a8886"><path d="M0 11.500h20.500L30.500 2l10 9.500H225" /></svg>
      <div className="grid grid-cols-[repeat(6,23px)] gap-3 pt-2.5 pl-3.5">
        {visuals.map(([name, art]) => (
          <button key={name} aria-label={name} className="h-[23px] w-[23px]">
            <svg viewBox="0 0 23 23" className="h-[23px] w-[23px] overflow-visible" fill="none" stroke={K}>{art}</svg>
          </button>
        ))}
      </div>
      <button aria-label="Get more visuals" className="mt-1.5 ml-4 block h-5 text-base leading-5 tracking-widest">...</button>
      <div className="mt-5 border-t border-[#e1dfdd] pt-3 pr-[7px] pl-[5px]">
        <h3 className="pl-2.5 leading-5">Values</h3>
        <button className="mt-[5px] block h-[35px] w-full rounded-sm border border-dashed border-[#b3b0ad] bg-white pl-3 text-left">Add data fields here</button>
        <h3 className="mt-3.5 pl-2.5 leading-5 font-semibold text-[#484644]">Drill through</h3>
        <div className="-mr-[7px] pt-1">
          <Toggle label="Cross-report" on={false} />
          <Toggle label="Keep all filters" on />
        </div>
        <button className="mt-1.5 block h-8 w-full rounded-sm border border-dashed border-[#b3b0ad] bg-white pl-2.5 text-left whitespace-nowrap">Add drill-through fields here</button>
      </div>
    </aside>
  );
}

function DataPane() {
  return (
    <aside className="w-[226px] shrink-0 border-l border-[#e1dfdd] bg-[#f3f2f1] text-sm text-[#252423]" aria-label="Data">
      <div className="flex h-12 items-center justify-between pt-0.5 pr-1 pl-[11px]">
        <h2 className="text-lg font-semibold">Data</h2>
        <button aria-label="Collapse data"><ChevronsRight className="h-7 w-7" strokeWidth={1.5} /></button>
      </div>
      <div className="px-[5px] pt-[9px]">
        <label className="flex h-[30px] items-center rounded-[5px] border border-[#d1d1d1] border-b-[#605e5c] bg-white pt-0.5 pl-3.5">
          <SearchIcon className="mr-2 h-5 w-5 shrink-0 text-[#605e5c]" strokeWidth={1.5} />
          <input aria-label="Search data" placeholder="Search" className="w-full bg-transparent text-base outline-none placeholder:text-[#707070]" />
        </label>
        <button className="mt-[17px] flex h-5 items-center pl-2 text-[#484644]">
          <ChevronRight className="h-5 w-5" strokeWidth={1.2} />
          <svg viewBox="0 0 16 16" className="mr-1.5 ml-1 h-4 w-4" fill="none" stroke={K} strokeWidth="1.500"><rect x="1" y="1" width="14" height="14" rx="2" /><path d="M1 5.500h14M1 10.500h14M5.500 1v14M10.500 1v14" /></svg>
          Pharma Group AG
        </button>
      </div>
    </aside>
  );
}

/* ---------- bottom bars ---------- */

const tabs: [string, string][] = [
  ["Home", "w-[91px]"],
  ["Hiring", "w-[92px]"],
  ["Promotion", "w-[121px]"],
  ["Performance", "w-[134px]"],
  ["Turnover", "w-[110px]"],
];

function PageTabs() {
  return (
    <div className="flex h-11 bg-[#f3f2f1] text-sm text-[#252423]">
      <div className="flex w-40 border-r border-[#a19f9d] pl-3">
        <button aria-label="Desktop layout" className="flex w-[30px] flex-col items-center justify-between pt-2 pb-1.5">
          <svg viewBox="0 0 26 20" className="h-5 w-[26px]" fill="none" stroke="#484644" strokeWidth="1.800"><path d="M1 1h24v14H1zM13 15v4M8 18.500h10" /></svg>
          <span className="h-[3px] w-full rounded bg-[#117865]" />
        </button>
        <button aria-label="Mobile layout" className="ml-8 self-center pb-1.5">
          <svg viewBox="0 0 16 26" className="h-[26px] w-4" fill="none" stroke="#484644" strokeWidth="1.800"><rect x="1" y="1" width="14" height="24" rx="1.500" /><path d="M7 21.500h2" /></svg>
        </button>
        <button aria-label="Previous page" className="ml-[26px]"><svg viewBox="0 0 6 10" className="h-2.5 w-1.5" fill="#c8c6c4"><path d="M6 0v10L0 5z" /></svg></button>
        <button aria-label="Next page" className="ml-[22px]"><svg viewBox="0 0 6 10" className="h-2.5 w-1.5" fill="#c8c6c4"><path d="M0 0v10l6-5z" /></svg></button>
      </div>
      {tabs.map(([t, w]) => (
        <button key={t} className={`border-r border-[#c8c6c4] bg-white pt-0.5 ${w}`}>{t}</button>
      ))}
      <div className="relative w-[133px] border-b-[5px] border-[#117865] bg-white">
        <button className="h-full w-full pt-1.5 font-semibold">Key Insights</button>
        <button aria-label="Delete page" className="absolute top-0.5 right-1.5 text-xs font-semibold">x</button>
      </div>
      <button aria-label="New page" className="flex w-[49px] items-center justify-center bg-[#117865]">
        <svg viewBox="0 0 14 14" className="h-3.5 w-3.5" stroke="#fff" strokeWidth="3"><path d="M7 0v14M0 7h14" /></svg>
      </button>
    </div>
  );
}

function StatusBar() {
  return (
    <footer className="flex h-[29px] items-center border-t border-[#dcdad8] bg-[#f3f2f1] pr-1.5 pl-[5px] text-sm text-[#484644]">
      <span className="flex-1 pt-0.5">Page 6 of 6</span>
      <button aria-label="Zoom out" className="mr-1.5 text-base leading-4 font-semibold">-</button>
      <input
        type="range"
        aria-label="Zoom"
        min={0}
        max={100}
        defaultValue={34}
        className="h-4 w-[125px] appearance-none bg-[linear-gradient(#605e5c,#605e5c),linear-gradient(#605e5c,#605e5c)] bg-[length:100%_1px,1px_8px] bg-[position:center,50%_center] bg-no-repeat [&::-webkit-slider-thumb]:h-3.5 [&::-webkit-slider-thumb]:w-[5px] [&::-webkit-slider-thumb]:appearance-none [&::-webkit-slider-thumb]:bg-[#605e5c]"
      />
      <button aria-label="Zoom in" className="ml-1.5 text-base leading-4 font-semibold">+</button>
      <span className="ml-[18px] text-[#605e5c]">73%</span>
      <button aria-label="Fit to page" className="ml-6">
        <svg viewBox="0 0 21 16" className="h-4 w-[21px]" fill="none" stroke="#484644" strokeWidth="1.500"><rect x="1" y="1" width="19" height="14" stroke="#5b7d99" /><path d="M4 6V4h3M14 4h3v2M17 10v2h-3M7 12H4v-2" /></svg>
      </button>
      <button className="ml-4 w-60 pt-0.5 text-left whitespace-nowrap">Update available (click to download)</button>
    </footer>
  );
}

function AppIcon({ label, children }: { label: string } & Kids) {
  return (
    <button aria-label={label} className="flex w-[55px] items-center justify-center">
      <svg viewBox="0 0 32 32" className="h-8 w-8 overflow-visible">{children}</svg>
    </button>
  );
}

function Taskbar() {
  return (
    <footer className="flex h-[61px] bg-[#1c1c1c] text-sm text-white">
      <div className="flex-1">
        <button className="flex items-center gap-2 pt-2.5 pl-[25px] text-left leading-5">
          <svg viewBox="0 0 32 40" className="h-10 w-8 overflow-visible"><path d="M2 12l11 10 5-2 9 8M27 21v7h-7" fill="none" stroke="#c8401e" strokeWidth="3" /><path d="M1 22h5v16H1zM9 28h4v10H9zM16 31h4v7h-4zM23 34h5v4h-5z" fill="#c83a10" /><circle cx="23" cy="9" r="10" fill="#ff99a4" /><text x="23" y="14" textAnchor="middle" fontSize="14" fill="#1c1c1c" fontFamily="Open Sans, sans-serif">1</text></svg>
          <span>S&amp;P 500<br /><span className="text-[#ff99a4]">-0.28%</span></span>
        </button>
      </div>
      <div className="flex">
        <AppIcon label="Start">
          <defs><linearGradient id="win" x1="0" y1="0" x2="1" y2="1"><stop offset="0" stopColor="#8ae0ff" /><stop offset="1" stopColor="#0a94f5" /></linearGradient></defs>
          <path d="M2 2h13.500v13.500H2zM16.500 2H30v13.500H16.500zM2 16.500h13.500V30H2zM16.500 16.500H30V30H16.500z" fill="url(#win)" />
        </AppIcon>
        <label className="mx-1 flex h-10 w-[274px] items-center self-center rounded-full border border-[#505050] bg-[#3b3b3b] pr-2.5 pl-3.5">
          <SearchIcon className="mr-3 h-5 w-5 shrink-0" strokeWidth={2.2} />
          <input aria-label="Taskbar search" placeholder="Search" className="min-w-0 flex-1 bg-transparent text-base outline-none placeholder:text-[#cfcfcf]" />
          <svg viewBox="0 0 52 26" className="h-[26px] w-[52px] shrink-0">
            <circle cx="13" cy="13" r="11.500" fill="#f0702a" />
            <path d="M2 10c9 0 16 5 20 11M8 3c8 4 9 13 6 21M20 4c-7 3-13 10-14 18M3 18c7-6 14-8 21-7" fill="none" stroke="#6e3420" strokeWidth="1.200" />
            <path d="M33 8c3-5 9-4 12-2 6 1 7 8 2 10-3 1-4 0-6-1l-5 9-7-4 6-10z" fill="#b9b9b9" />
            <circle cx="38" cy="10" r="2" fill="#4a4a4a" />
          </svg>
        </label>
        <AppIcon label="Task view"><path d="M9 2h22v20H9z" fill="#f2f2f2" /><path d="M1 10h22v20H1z" fill="#777" /><path d="M9 10h14v12H9z" fill="#bdbdbd" /></AppIcon>
        <AppIcon label="Teams">
          <circle cx="17" cy="7" r="5" fill="#7b83eb" /><circle cx="27" cy="9" r="3.500" fill="#5059c9" />
          <path d="M22 14h9v8c0 7-9 7-9 0z" fill="#5059c9" /><path d="M10 14h14v9c0 10-14 10-14 0z" fill="#7b83eb" /><rect x="1" y="8" width="15" height="16" rx="1.500" fill="#4b53bc" />
          <text x="8.500" y="20" textAnchor="middle" fontSize="11" fontWeight="700" fill="#fff" fontFamily="Open Sans, sans-serif">T</text>
        </AppIcon>
        <AppIcon label="Copilot">
          <defs>
            <linearGradient id="cp1" x1="0" y1="0" x2="0" y2="1"><stop offset="0" stopColor="#1b7ff0" /><stop offset=".6" stopColor="#2fc3a0" /><stop offset="1" stopColor="#f4c520" /></linearGradient>
            <linearGradient id="cp2" x1="0" y1="0" x2="0" y2="1"><stop offset="0" stopColor="#b45ce8" /><stop offset=".6" stopColor="#f0567e" /><stop offset="1" stopColor="#ff9a4a" /></linearGradient>
          </defs>
          <path d="M20 2h-8C6 2 4 7 2 14c-2 6 0 9 4 9h4c3 0 4-2 5-6l3-9c1-3 2-6 6-6z" fill="url(#cp1)" />
          <path d="M20 2c3 0 4 3 5 7h-7c0-4 0-7 2-7z" fill="#1558c8" />
          <path d="M12 30h8c6 0 8-5 10-12 2-6 0-9-4-9h-4c-3 0-4 2-5 6l-3 9c-1 3-2 6-2 6z" fill="url(#cp2)" />
          <path d="M12 30c-3 0-4-3-5-7h4c3 0 3-2 4-4l1 3c-1 5-2 8-4 8z" fill="#f0562a" />
        </AppIcon>
        <AppIcon label="File Explorer"><path d="M1 6c0-2 1-3 3-3h8l4 4h13c2 0 2 1 2 3v18H1z" fill="#e8a317" /><path d="M1 11h30v18H1z" fill="#ffd34e" /><path d="M6 29v-6c0-1 1-2 2-2h16c1 0 2 1 2 2v6z" fill="#1b82d8" /><circle cx="16" cy="37" r="2" fill="#9a9a9a" /></AppIcon>
        <AppIcon label="Edge">
          <defs><linearGradient id="edge" x1="0" y1="0" x2="1" y2="0"><stop offset="0" stopColor="#1c8fe0" /><stop offset=".5" stopColor="#2fc0e0" /><stop offset="1" stopColor="#5fe07a" /></linearGradient></defs>
          <circle cx="16" cy="16" r="15" fill="#1266b8" /><path d="M1 16C1-4 31-4 31 14c0 8-14 8-13 2 1-3 1-5-2-6C9 8 3 12 1 16z" fill="url(#edge)" /><path d="M18 16c-3 6 4 10 12 7l-2 3C20 28 13 24 13 18c0-4 3-6 5-2z" fill="#1c1c1c" /><circle cx="8" cy="24" r="7.500" fill="#b8b8b8" /><circle cx="8" cy="21.500" r="2.800" fill="#555" /><path d="M3 29c0-6 10-6 10 0z" fill="#555" />
        </AppIcon>
        <AppIcon label="Microsoft Store"><path d="M9 8V3h14v5" fill="none" stroke="#35a7f0" strokeWidth="2.500" /><path d="M2 7h28v19c0 3-2 5-4 5H6c-2 0-4-2-4-5z" fill="#f1f1f1" /><path d="M10 13h5.500v5.500H10z" fill="#f25022" /><path d="M16.500 13H22v5.500h-5.500z" fill="#7fba00" /><path d="M10 19.500h5.500V25H10z" fill="#00a4ef" /><path d="M16.500 19.500H22V25h-5.500z" fill="#0a78d4" /></AppIcon>
        <AppIcon label="MyASUS">
          <defs><linearGradient id="asus" x1="0" y1="1" x2="1" y2="0"><stop offset="0" stopColor="#5a10f0" /><stop offset="1" stopColor="#1a9cff" /></linearGradient></defs>
          <path d="M1 1h30v30H1z" fill="url(#asus)" /><path d="M5 23L13 9M12 23l8-14h2v14M22 9l4 14" stroke="#fff" strokeWidth="2.500" fill="none" />
        </AppIcon>
        <AppIcon label="Seal">
          <path d="M1 1h30v30H1z" fill="#fdfdfb" />
          <path d="M4 12c-3 10 4 17 12 18 8-1 15-8 12-18l-3 8-9 6-9-6z" fill="#e0582e" />
          <path d="M6 12l4 5 12 0 4-5 0 9-5 4H11l-5-4z" fill="#4a78c0" />
          <circle cx="16" cy="14" r="7" fill="#fff4dc" stroke="#e9a53a" strokeWidth="2" />
          <path d="M16 9l4 8h-8z" fill="#f5c83c" stroke="#d9452e" />
          <path d="M12 3h8l-2 4h-4z" fill="#e9a53a" />
          <path d="M8 21c5 4 11 4 16 0M7 24c6 5 12 5 18 0" fill="none" stroke="#f5d04c" strokeWidth="1.500" />
        </AppIcon>
        <AppIcon label="Browser"><path d="M20 24c-6 6-16 2-16-7C4 7 18 7 18 16H8c0 7 6 8 11 5" fill="none" stroke="#2aa3ea" strokeWidth="4" /><path d="M21 4l8 8M29 3l-7 9" stroke="#5a5a5a" strokeWidth="2" /></AppIcon>
        <button aria-label="Power BI Desktop" className="ml-1 flex h-[50px] w-12 flex-col items-center justify-end self-center rounded border border-[#3a3a3a] bg-[#2b2b2b]">
          <svg viewBox="0 0 24 32" className="mb-1.5 h-8 w-6"><rect x="14" y="1" width="9" height="30" rx="1" fill="#d9970f" /><rect x="7" y="8" width="11" height="23" rx="1" fill="#f2c431" /><rect x="1" y="16" width="10" height="15" rx="1" fill="#ffe07a" /></svg>
          <span className="h-[3px] w-5 rounded bg-[#f4806a]" />
        </button>
      </div>
      <div className="flex flex-1 items-center justify-end">
        <ChevronUp className="mr-5 h-5 w-5" />
        <svg viewBox="0 0 20 18" className="mr-2.5 h-[18px] w-5" fill="none" stroke="#fff" strokeWidth="1.800"><path d="M1 7c5-6 13-6 18 0" stroke="#777" /><path d="M4 10.500c3-4 9-4 12 0M7 13c2-2 4-2 6 0" /><circle cx="10" cy="15.500" r="1.500" fill="#fff" stroke="none" /></svg>
        <svg viewBox="0 0 20 18" className="mr-2.5 h-[18px] w-5" fill="none" stroke="#fff" strokeWidth="1.500"><path d="M1 6h3l5-4v14l-5-4H1zM12 6c2 2 2 4 0 6M14 4c3 3 3 7 0 10M16 2c4 4 4 10 0 14" /></svg>
        <svg viewBox="0 0 20 18" className="mr-[22px] h-[18px] w-5" fill="none" stroke="#fff" strokeWidth="1.500"><path d="M9 5h7c2 0 2 1 2 2v7c0 2-1 2-2 2H5M19 9v3" /><path d="M6 0C0 4-1 10 2 13c5 1 7-6 4-13zM2 16l2-4" fill="#fff" /><path d="M9 13l6-6v6z" fill="#fff" stroke="none" /></svg>
        <div className="mr-3 text-right leading-5">9:59 PM<br />10/22/2024</div>
        <svg viewBox="0 0 16 20" className="mr-[27px] h-5 w-4" fill="#f89a80"><path d="M8 0c4 0 6 3 6 7v5l2 3v1H0v-1l2-3V7c0-4 2-7 6-7zM5 17h6c0 3-6 3-6 0z" /></svg>
      </div>
    </footer>
  );
}

export default function App() {
  return (
    <div className="flex min-h-screen flex-col font-['Open_Sans','Noto_Sans',sans-serif]">
      <TitleBar />
      <div className="relative z-10 bg-[#fafafa] shadow-md">
        <MenuBar />
        <Ribbon />
      </div>
      <main className="flex flex-1">
        <ViewRail />
        <div className="flex min-w-0 flex-1 flex-col">
          <div className="flex flex-1">
            <ReportPage />
            <FiltersPane />
          </div>
          <PageTabs />
        </div>
        <VisualizationsPane />
        <DataPane />
      </main>
      <StatusBar />
      <div className="h-px bg-linear-to-r from-black from-44% to-white to-44%" />
      <Taskbar />
    </div>
  );
}
